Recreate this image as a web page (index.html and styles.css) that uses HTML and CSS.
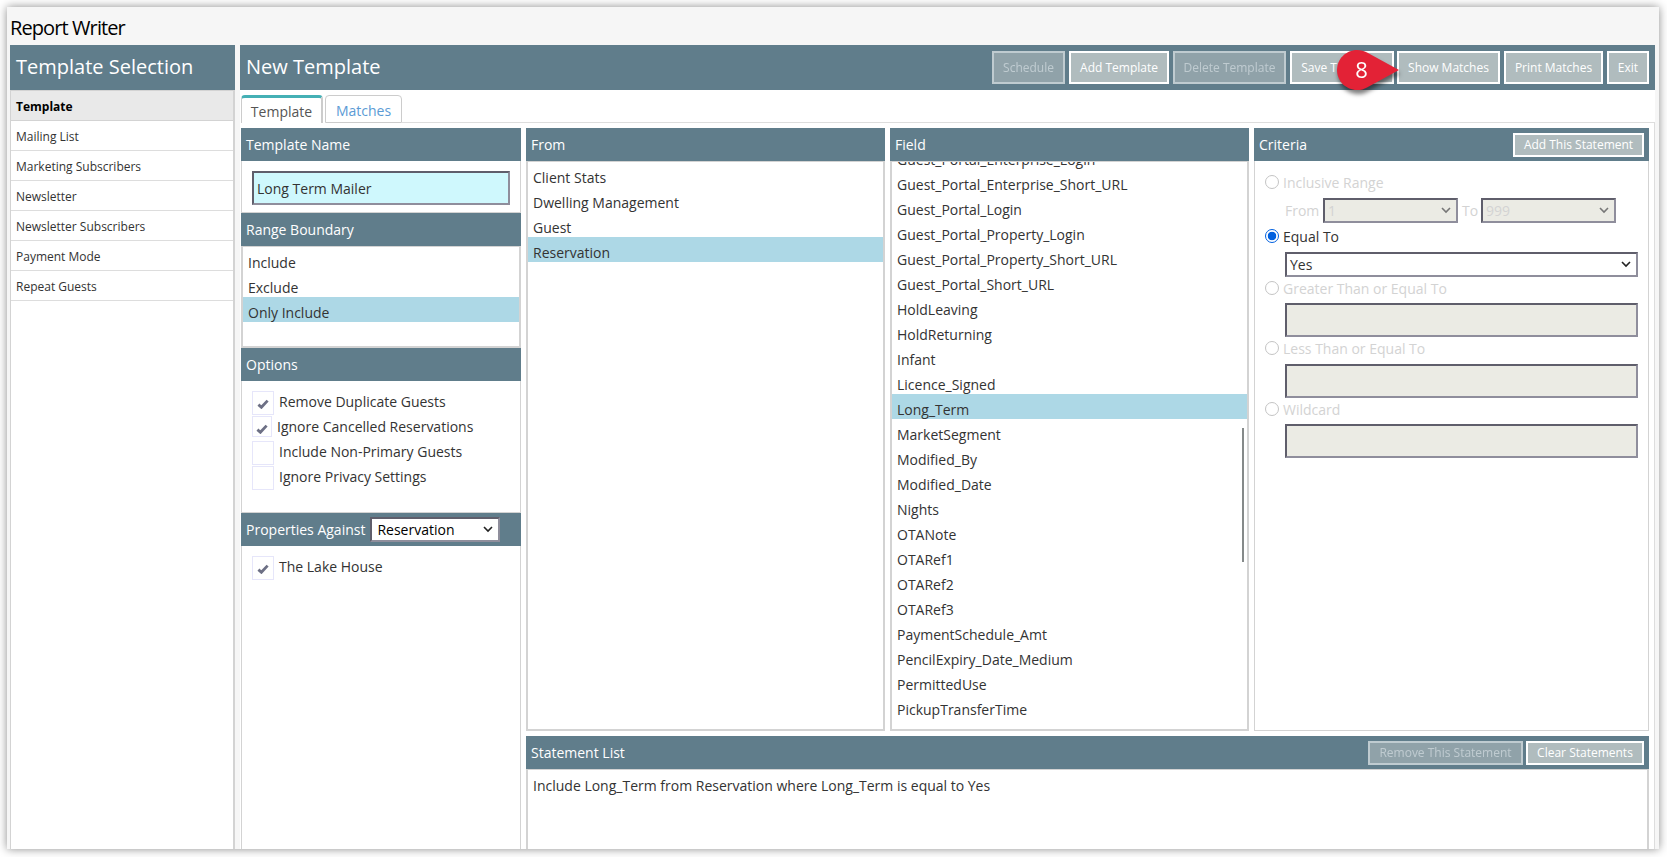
FILE: index.html
```html
<!DOCTYPE html>
<html lang="en">
<head>
<meta charset="utf-8">
<title>Report Writer</title>
<link rel="stylesheet" href="styles.css">
</head>
<body>
<div class="window">
  <h1 class="page-title">Report Writer</h1>
  <div class="layout">
    <aside class="sidebar">
      <div class="bar">Template Selection</div>
      <div class="templates">
        <div class="trow thead">Template</div>
        <div class="trow">Mailing List</div>
        <div class="trow">Marketing Subscribers</div>
        <div class="trow">Newsletter</div>
        <div class="trow">Newsletter Subscribers</div>
        <div class="trow">Payment Mode</div>
        <div class="trow">Repeat Guests</div>
      </div>
    </aside>
    <main class="main">
      <div class="bar">
        <span class="bar-title">New Template</span>
        <div class="toolbar">
          <button class="btn w-schedule" disabled>Schedule</button>
          <button class="btn w-add">Add Template</button>
          <button class="btn w-delete" disabled>Delete Template</button>
          <button class="btn w-save">Save Template</button>
          <button class="btn w-show">Show Matches</button>
          <button class="btn w-print">Print Matches</button>
          <button class="btn w-exit">Exit</button>
        </div>
      </div>
      <div class="tabs">
        <div class="tab active">Template</div>
        <div class="tab">Matches</div>
        <div class="tab-fill"></div>
      </div>
      <div class="content">
        <div class="col-left">
          <div class="head">Template Name</div>
          <div class="box name-box"><div class="field name-field">Long Term Mailer</div></div>
          <div class="head">Range Boundary</div>
          <div class="list range-list">
            <div class="item">Include</div>
            <div class="item">Exclude</div>
            <div class="item selected">Only Include</div>
          </div>
          <div class="head">Options</div>
          <div class="box options-box">
            <div class="option"><span class="check"><svg viewBox="0 0 12 10"><path d="M1.4 5.6 4.4 8.3 10.6 1.6"/></svg></span>Remove Duplicate Guests</div>
            <div class="option"><span class="check small"><svg viewBox="0 0 12 10"><path d="M1.4 5.6 4.4 8.3 10.6 1.6"/></svg></span>Ignore Cancelled Reservations</div>
            <div class="option"><span class="check"></span>Include Non-Primary Guests</div>
            <div class="option"><span class="check"></span>Ignore Privacy Settings</div>
          </div>
          <div class="head">Properties Against
            <div class="select against">Reservation<svg class="chev" viewBox="0 0 10 7"><path d="M1 1 5 5 9 1"/></svg></div>
          </div>
          <div class="box props-box">
            <div class="option"><span class="check"><svg viewBox="0 0 12 10"><path d="M1.4 5.6 4.4 8.3 10.6 1.6"/></svg></span>The Lake House</div>
          </div>
        </div>
        <div class="col-right">
          <div class="trio">
            <section class="panel from">
              <div class="head">From</div>
              <div class="list">
                <div class="item">Client Stats</div>
                <div class="item">Dwelling Management</div>
                <div class="item">Guest</div>
                <div class="item selected">Reservation</div>
              </div>
            </section>
            <section class="panel from">
              <div class="head">Field</div>
              <div class="list scrolled">
                <div class="item">Guest_Portal_Enterprise_Login</div>
                <div class="item">Guest_Portal_Enterprise_Short_URL</div>
                <div class="item">Guest_Portal_Login</div>
                <div class="item">Guest_Portal_Property_Login</div>
                <div class="item">Guest_Portal_Property_Short_URL</div>
                <div class="item">Guest_Portal_Short_URL</div>
                <div class="item">HoldLeaving</div>
                <div class="item">HoldReturning</div>
                <div class="item">Infant</div>
                <div class="item">Licence_Signed</div>
                <div class="item selected">Long_Term</div>
                <div class="item">MarketSegment</div>
                <div class="item">Modified_By</div>
                <div class="item">Modified_Date</div>
                <div class="item">Nights</div>
                <div class="item">OTANote</div>
                <div class="item">OTARef1</div>
                <div class="item">OTARef2</div>
                <div class="item">OTARef3</div>
                <div class="item">PaymentSchedule_Amt</div>
                <div class="item">PencilExpiry_Date_Medium</div>
                <div class="item">PermittedUse</div>
                <div class="item">PickupTransferTime</div>
                <div class="thumb"></div>
              </div>
            </section>
            <section class="panel criteria">
              <div class="head split"><span>Criteria</span><button class="btn sm w-addst">Add This Statement</button></div>
              <div class="box criteria-box">
                <div class="radio-row"><span class="radio"></span>Inclusive Range</div>
                <div class="range-row">
                  <span class="lbl-from">From</span>
                  <div class="select off">1<svg class="chev" viewBox="0 0 10 7"><path d="M1 1 5 5 9 1"/></svg></div>
                  <span class="lbl-to">To</span>
                  <div class="select off">999<svg class="chev" viewBox="0 0 10 7"><path d="M1 1 5 5 9 1"/></svg></div>
                </div>
                <div class="radio-row on"><span class="radio"></span>Equal To</div>
                <div class="select equal">Yes<svg class="chev" viewBox="0 0 10 7"><path d="M1 1 5 5 9 1"/></svg></div>
                <div class="radio-row greater"><span class="radio"></span>Greater Than or Equal To</div>
                <div class="field off"></div>
                <div class="radio-row less"><span class="radio"></span>Less Than or Equal To</div>
                <div class="field off"></div>
                <div class="radio-row wild"><span class="radio"></span>Wildcard</div>
                <div class="field off"></div>
              </div>
            </section>
          </div>
          <section class="statements">
            <div class="head split"><span>Statement List</span>
              <div class="pair"><button class="btn sm w-remove" disabled>Remove This Statement</button><button class="btn sm w-clear">Clear Statements</button></div>
            </div>
            <div class="list statement-list"><div class="item">Include Long_Term from Reservation where Long_Term is equal to Yes</div></div>
          </section>
        </div>
      </div>
    </main>
  </div>
  <div class="pin">
    <svg viewBox="0 0 62 40"><path d="M20 0C9 0 0 9 0 20s9 20 20 20c4 0 7-1 10-2.600L62 20 30 2.600C27 1 24 0 20 0z"/></svg>
    <span class="pin-num">8</span>
  </div>
</div>
</body>
</html>
```
FILE: styles.css
```css
* { box-sizing: border-box; }
body {
  margin: 0;
  height: 857px;
  overflow: hidden;
  padding: 7px 8px 8px 7px;
  background: #fff;
  font: 14px/20px "Open Sans", sans-serif;
  color: #333;
}
.window {
  position: relative;
  display: flex;
  flex-direction: column;
  height: 842px;
  padding: 0 4px 0 3px;
  background: #f6f6f6;
  box-shadow: 0 0 9px rgba(0, 0, 0, .45);
}
.page-title {
  margin: 0;
  height: 38px;
  padding: 7px 0 0;
  font-size: 20px;
  font-weight: 400;
  line-height: 28px;
  letter-spacing: -.9px;
  color: #000;
}
.layout { display: flex; flex: 1; gap: 5px; min-height: 0; }
.sidebar { display: flex; flex-direction: column; width: 225px; }
.bar {
  display: flex;
  justify-content: space-between;
  align-items: center;
  flex: none;
  height: 45px;
  padding: 0 6px;
  background: #607d8b;
  color: #fff;
  font-size: 20px;
  line-height: 26px;
}
.sidebar .bar { padding-bottom: 1px; }
.bar-title { padding-bottom: 2px; }
.templates {
  flex: 1;
  background: #fff;
  border: solid #d3d3d3;
  border-width: 1px 2px 0 1px;
}
.trow {
  height: 30px;
  padding: 2px 5px 0;
  border-bottom: 1px solid #ddd;
  font-size: 12px;
  line-height: 28px;
}
.thead { background: #e9e9e9; color: #000; font-weight: 700; border-color: #d3d3d3; }
.main { display: flex; flex-direction: column; width: 1415px; background: #fff; }
.toolbar { display: flex; gap: 4px; }
.btn {
  height: 33px;
  padding: 0;
  border: 2px solid #fff;
  background: #b0bcbe;
  color: #fff;
  font: 12px/16px "Open Sans", sans-serif;
  text-align: center;
  white-space: nowrap;
}
.btn:disabled { opacity: .6; }
.btn.sm { height: 24px; }
.w-schedule { width: 73px; }
.w-add { width: 100px; }
.w-delete { width: 113px; }
.w-save { width: 104px; margin-right: -1px; }
.w-show { width: 103px; }
.w-print { width: 99px; }
.w-exit { width: 42px; }
.w-addst { width: 131px; }
.w-remove { width: 155px; }
.w-clear { width: 118px; }
.tabs { display: flex; flex: none; height: 33px; padding: 5px 0 0 1px; }
.tab {
  width: 77px;
  height: 28px;
  padding-top: 5px;
  border: 1px solid #ccc;
  border-radius: 4px 4px 0 0;
  text-align: center;
  color: #5b9bd5;
}
.tab.active {
  width: 82px;
  margin-right: 2px;
  padding-top: 4px;
  border-width: 3px 2px 0 1px;
  border-top-color: #45b0b5;
  color: #555;
}
.tab-fill { flex: 1; border-bottom: 1px solid #ddd; }
.content {
  display: flex;
  flex: 1;
  gap: 5px;
  min-height: 0;
  padding: 5px 5px 0 1px;
  border-right: 1px solid #ddd;
}
.col-left { display: flex; flex-direction: column; width: 280px; }
.col-right { display: flex; flex-direction: column; width: 1123px; gap: 5px; }
.head {
  display: flex;
  align-items: center;
  flex: none;
  height: 33px;
  padding: 0 5px;
  background: #607d8b;
  color: #fff;
}
.split { justify-content: space-between; }
.pair { display: flex; gap: 3px; }
.box { border: solid #d3d3d3; border-width: 0 1px 1px; }
.list {
  position: relative;
  border: 2px solid #d3d3d3;
  border-top-width: 1px;
  overflow: hidden;
}
.item { height: 25px; padding: 6px 5px 0; line-height: 19px; white-space: nowrap; }
.selected { background: #add8e6; }
.field, .select {
  border: 2px solid;
  border-color: #5f5e6b #8f8e9c #8f8e9c #5f5e6b;
  background: #fff;
}
.field { height: 34px; }
.name-box { height: 52px; padding: 10px; }
.name-field { width: 258px; padding: 6px 3px; background: #cff8fd; }
.range-list { height: 102px; }
.options-box { height: 132px; padding: 10px; }
.props-box { flex: 1; padding: 10px; border-bottom: 0; }
.option { display: flex; height: 25px; line-height: 22px; }
.check {
  display: flex;
  align-items: center;
  justify-content: center;
  width: 22px;
  height: 24px;
  margin-right: 5px;
  padding-top: 2px;
  border: 1px solid #e6e6fa;
}
.check.small { width: 20px; height: 21px; padding-top: 4px; }
.check svg { width: 12px; height: 10px; fill: none; stroke: #6d7085; stroke-width: 2.8; }
.select {
  display: flex;
  align-items: center;
  justify-content: space-between;
  height: 25px;
  padding: 0 5px 0 3px;
}
.chev { width: 10px; height: 7px; fill: none; stroke: #222; stroke-width: 1.6; }
.against { width: 130px; margin-left: 5px; padding-left: 5px; color: #000; }
.trio { display: flex; gap: 5px; height: 603px; flex: none; }
.panel { display: flex; flex-direction: column; }
.from { width: 359px; }
.criteria { width: 395px; }
.panel .list, .criteria-box { flex: 1; }
.scrolled .item:first-child { margin-top: -18px; }
.thumb {
  position: absolute;
  right: 3px;
  top: 266px;
  width: 2px;
  height: 134px;
  background: #858a8a;
}
.criteria-box { padding: 11px 10px 0; color: #d3d3d3; }
.radio-row { display: flex; height: 20px; padding-top: 1px; }
.radio {
  width: 14px;
  height: 14px;
  margin: 2px 4px 0 0;
  border: 1px solid #c4c4c4;
  border-radius: 50%;
}
.range-row { display: flex; align-items: center; height: 25px; margin: 6px 0 3px 20px; }
.range-row .select { width: 135px; }
.lbl-from { width: 38px; }
.lbl-to { width: 23px; padding-left: 4px; }
.off { background: #ebebe4; }
.off .chev { stroke: #777; }
.on { color: #333; height: 21px; }
.on .radio { border-color: #0060df; background: radial-gradient(#0060df 4px, #fff 4.600px); }
.equal { width: 353px; margin: 5px 0 0 20px; color: #333; }
.criteria-box .field { width: 353px; margin-left: 20px; }
.greater, .less, .wild { padding-top: 2px; }
.greater, .wild { height: 26px; }
.less { height: 27px; }
.statements { display: flex; flex-direction: column; flex: 1; min-height: 0; }
.statement-list { flex: 1; border-bottom: 0; }
.pin {
  position: absolute;
  left: 1330px;
  top: 43px;
  width: 62px;
  height: 40px;
  filter: drop-shadow(1px 4px 2px rgba(0, 0, 0, .5));
}
.pin svg { display: block; width: 62px; height: 40px; fill: #e32236; }
.pin-num {
  position: absolute;
  left: 0;
  top: 4px;
  width: 49px;
  text-align: center;
  font-size: 22px;
  line-height: 30px;
  color: #fff;
}
```
